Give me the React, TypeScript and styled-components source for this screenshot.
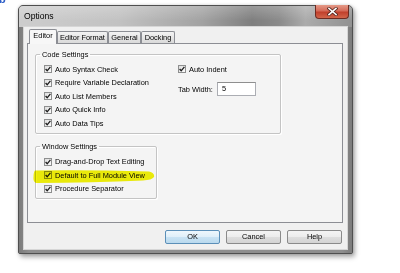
import React from 'react';
import styled, { createGlobalStyle } from 'styled-components';

const GlobalStyle = createGlobalStyle`
  html, body {
    margin: 0;
    padding: 0;
    background: #ffffff;
  }
  body {
    width: 400px;
    height: 273px;
    overflow: hidden;
    font-family: 'Liberation Sans', Arial, sans-serif;
    color: #000;
  }
`;

type CheckProps = { label: string; highlight?: boolean };

const CheckMark = () => (
  <svg width="6" height="6" viewBox="0 0 6 6">
    <path d="M0.6 3 L2.2 4.8 L5.4 0.8" fill="none" stroke="#1c1c1c" strokeWidth="1.3" />
  </svg>
);

const Marker = () => (
  <HighlightSvg width="124" height="15" viewBox="0 0 124 15">
    <path
      d="M2 1.5 Q50 0.5 116 2.5 Q122 4 121 8 Q119 11 110 11.5 Q60 13.5 3 14 Q0 13 0.5 8 Q0.5 3 2 1.5 Z"
      fill="#f4f40a"
    />
  </HighlightSvg>
);

const CheckItem: React.FC<CheckProps> = ({ label, highlight }) => (
  <CheckRow>
    <Box>
      <CheckMark />
    </Box>
    <Label>{label}</Label>
    {highlight && <Marker />}
  </CheckRow>
);

const App: React.FC = () => {
  const tabs = [
    { name: 'Editor', width: 28, active: true },
    { name: 'Editor Format', width: 51 },
    { name: 'General', width: 33 },
    { name: 'Docking', width: 34 },
  ];

  return (
    <>
      <GlobalStyle />
      <Stage>
        <StrayGlyph>b</StrayGlyph>
        <Window>
          <TitleBar>
            <Title>Options</Title>
            <CloseButton>
              <svg width="11" height="9" viewBox="0 0 11 9">
                <path d="M2 1.5 L9 7.5 M9 1.5 L2 7.5" stroke="#5a2a22" strokeWidth="3.2" strokeLinecap="square" />
                <path d="M2 1.5 L9 7.5 M9 1.5 L2 7.5" stroke="#ffffff" strokeWidth="1.6" strokeLinecap="square" />
              </svg>
            </CloseButton>
          </TitleBar>
          <Body>
            <Client>
              <TabStrip>
                {tabs.map((t) => (
                  <Tab key={t.name} tabWidth={t.width} active={t.active}>
                    {t.name}
                  </Tab>
                ))}
              </TabStrip>
              <Panel>
                <GroupBox groupWidth={246} padTop={3.5} padBottom={3}>
                  <Legend>Code Settings</Legend>
                  <Columns>
                    <Column colWidth={134}>
                      <CheckItem label="Auto Syntax Check" />
                      <CheckItem label="Require Variable Declaration" />
                      <CheckItem label="Auto List Members" />
                      <CheckItem label="Auto Quick Info" />
                      <CheckItem label="Auto Data Tips" />
                    </Column>
                    <Column>
                      <CheckItem label="Auto Indent" />
                      <TabWidthRow>
                        <Label>Tab Width:</Label>
                        <TextBox>5</TextBox>
                      </TabWidthRow>
                    </Column>
                  </Columns>
                </GroupBox>
                <GroupBox groupWidth={122} padTop={4.5} padBottom={2.5} spaced>
                  <Legend>Window Settings</Legend>
                  <Column>
                    <CheckItem label="Drag-and-Drop Text Editing" />
                    <CheckItem label="Default to Full Module View" highlight />
                    <CheckItem label="Procedure Separator" />
                  </Column>
                </GroupBox>
              </Panel>
              <Footer>
                <Button primary>OK</Button>
                <Button>Cancel</Button>
                <Button>Help</Button>
              </Footer>
            </Client>
          </Body>
        </Window>
      </Stage>
    </>
  );
};

const Stage = styled.div`
  position: relative;
  padding: 5px 0 0 18px;
`;

const StrayGlyph = styled.span`
  position: absolute;
  left: -1px;
  top: -7px;
  font-size: 11px;
  font-weight: bold;
  color: #2f5fc8;
`;

const Window = styled.div`
  width: 335px;
  height: 249px;
  box-sizing: border-box;
  display: flex;
  flex-direction: column;
  border: 1px solid #4f4f4f;
  border-radius: 5px 5px 2px 2px;
  background: #868686;
  box-shadow: 2px 3px 5px rgba(0, 0, 0, 0.35), 0 0 3px rgba(0, 0, 0, 0.15);
`;

const TitleBar = styled.div`
  height: 21px;
  display: flex;
  justify-content: space-between;
  border-radius: 4px 4px 0 0;
  background: linear-gradient(rgba(255, 255, 255, 0.22), rgba(255, 255, 255, 0) 70%),
    linear-gradient(
      to right,
      #cdcdcd 0%,
      #c2c2c2 30%,
      #a2a2a2 55%,
      #7e7e7e 70%,
      #8a8a8a 78%,
      #ababab 86%,
      #929292 100%
    );
`;

const Title = styled.span`
  padding: 3px 0 0 5px;
  font-size: 8.6px;
  line-height: 14px;
`;

const CloseButton = styled.div`
  width: 34px;
  height: 14px;
  margin: -1px 3px 0 0;
  box-sizing: border-box;
  display: flex;
  align-items: center;
  justify-content: center;
  border: 1px solid #6d2b22;
  border-top: none;
  border-radius: 0 0 4px 4px;
  background: linear-gradient(#e49a88 0%, #d56a58 45%, #c1402c 55%, #d2654a 100%);
`;

const Body = styled.div`
  flex: 1;
  display: flex;
  padding: 0 5px 4px 5px;
  background: linear-gradient(to right, #7b7b7b, #8e8e8e 3%, #8e8e8e 97%, #7b7b7b);
`;

const Client = styled.div`
  flex: 1;
  display: flex;
  flex-direction: column;
  padding: 2px 4px 5px 3px;
  background: #f0f0f0;
  box-shadow: 0 0 0 1px #d6d6d6;
`;

const TabStrip = styled.div`
  position: relative;
  z-index: 1;
  height: 14px;
  display: flex;
  align-items: flex-end;
  padding-left: 2px;
`;

const Tab = styled.div<{ tabWidth: number; active?: boolean }>`
  width: ${({ tabWidth }) => tabWidth}px;
  height: ${({ active }) => (active ? 15 : 12)}px;
  margin-bottom: ${({ active }) => (active ? -1 : 0)}px;
  box-sizing: border-box;
  border: 1px solid #8c8e94;
  border-bottom: none;
  border-radius: 2px 2px 0 0;
  background: ${({ active }) =>
    active ? '#f7f7f7' : 'linear-gradient(#f3f3f3, #e6e6e6 50%, #d9d9d9)'};
  font-size: 7.4px;
  line-height: ${({ active }) => (active ? 12 : 11)}px;
  text-align: center;
  white-space: nowrap;
`;

const Panel = styled.div`
  height: 180px;
  box-sizing: border-box;
  border: 1px solid #8c8e94;
  background: #f4f4f4;
  padding: 6px 0 0 7px;
`;

const GroupBox = styled.fieldset<{
  groupWidth: number;
  padTop: number;
  padBottom: number;
  spaced?: boolean;
}>`
  width: ${({ groupWidth }) => groupWidth}px;
  box-sizing: border-box;
  min-width: 0;
  margin: ${({ spaced }) => (spaced ? 7.5 : 0)}px 0 0 0;
  padding: ${({ padTop }) => padTop}px 0 ${({ padBottom }) => padBottom}px 8px;
  border: 1px solid #c4c4c4;
  border-radius: 2px;
  box-shadow: inset 1px 1px 0 #ffffff, 1px 1px 0 #ffffff;
`;

const Legend = styled.legend`
  margin-left: -4px;
  padding: 0 2px;
  font-size: 7.4px;
  line-height: 9px;
`;

const Columns = styled.div`
  display: flex;
`;

const Column = styled.div<{ colWidth?: number }>`
  display: flex;
  flex-direction: column;
  width: ${({ colWidth }) => (colWidth ? `${colWidth}px` : 'auto')};
`;

const CheckRow = styled.div`
  position: relative;
  height: 13.5px;
  display: flex;
  align-items: center;
  gap: 3px;
`;

const Box = styled.div`
  width: 8px;
  height: 8px;
  box-sizing: border-box;
  display: flex;
  align-items: center;
  justify-content: center;
  border: 1px solid #8e8f8f;
  background: linear-gradient(135deg, #dedede, #fbfbfb);
`;

const Label = styled.span`
  font-size: 7.4px;
  white-space: nowrap;
`;

const HighlightSvg = styled.svg`
  position: absolute;
  left: -11px;
  top: 0;
  mix-blend-mode: multiply;
  pointer-events: none;
`;

const TabWidthRow = styled.div`
  display: flex;
  align-items: center;
  gap: 4px;
  margin-top: 6px;
`;

const TextBox = styled.div`
  width: 39px;
  height: 14px;
  box-sizing: border-box;
  border: 1px solid #abadb3;
  border-top-color: #8f8f8f;
  background: #ffffff;
  padding-left: 4px;
  font-size: 7.4px;
  line-height: 12px;
`;

const Footer = styled.div`
  display: flex;
  justify-content: flex-end;
  gap: 6px;
  margin-top: 7px;
  padding-right: 1px;
`;

const Button = styled.div<{ primary?: boolean }>`
  width: 55px;
  height: 14px;
  box-sizing: border-box;
  border: 1px solid ${({ primary }) => (primary ? '#5b8fb8' : '#8a8a8a')};
  border-radius: 2px;
  background: ${({ primary }) =>
    primary
      ? 'linear-gradient(#eef7fc, #dfeff9 50%, #c9e3f4 51%, #b9d9ee)'
      : 'linear-gradient(#f4f4f4, #ececec 50%, #dedede 51%, #d3d3d3)'};
  font-size: 7.4px;
  line-height: 12px;
  text-align: center;
`;

export default App;
